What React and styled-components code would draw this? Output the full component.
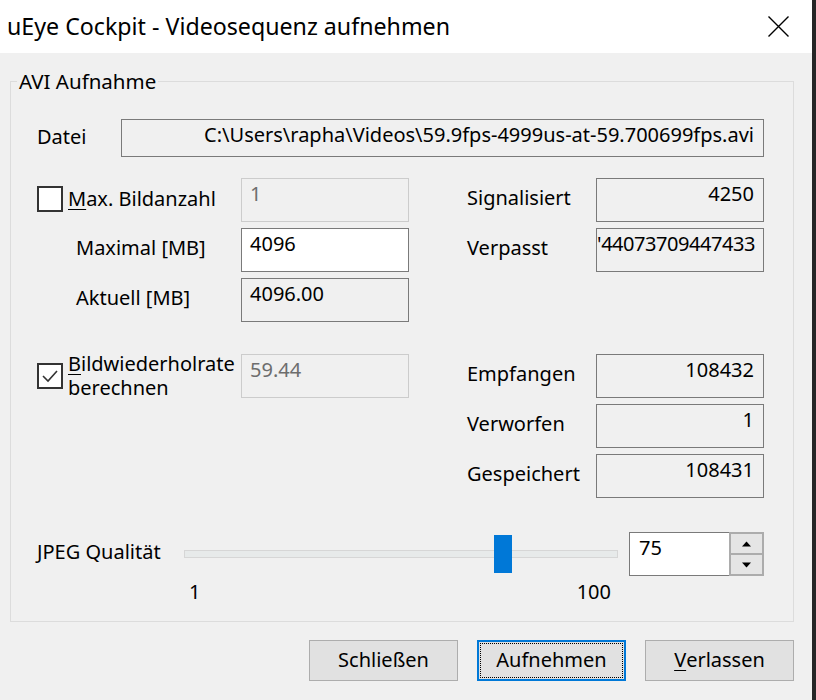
import React from 'react';
import styled, { createGlobalStyle, css } from 'styled-components';

const Global = createGlobalStyle`
  html, body { margin: 0; padding: 0; background: #262626; }
  body { font-family: "Noto Sans", "Open Sans", sans-serif; }
`;

const FONT = `"Noto Sans", "Open Sans", sans-serif`;

const Window = styled.div`
  width: 812px;
  height: 700px;
  background: #f0f0f0;
  display: flex;
  flex-direction: column;
  color: #000;
  font-family: ${FONT};
  font-size: 20px;
`;

const TitleBar = styled.div`
  height: 53px;
  flex: none;
  background: #fff;
  display: flex;
  align-items: center;
  justify-content: space-between;
  padding: 0 23px 0 7px;
  box-sizing: border-box;
`;

const Title = styled.div`
  font-size: 23.2px;
  line-height: 28px;
  margin-top: -2px;
`;

const Body = styled.div`
  flex: 1;
  display: flex;
  flex-direction: column;
  padding-top: 16px;
`;

const Group = styled.fieldset`
  margin: 0 18px 0 10px;
  padding: 0;
  min-width: 0;
  border: 1px solid #dcdcdc;
  height: 553px;
  box-sizing: border-box;
`;

const Legend = styled.legend`
  margin-left: 6px;
  padding: 0 2px;
  font-size: 20.5px;
  line-height: 24px;
`;

const Content = styled.div`
  padding: 26px 28px 0 26px;
  display: flex;
  flex-direction: column;
`;

const Row = styled.div`
  display: flex;
  align-items: center;
`;

const Label = styled.div`
  width: ${p => p.$w || 'auto'};
  flex: none;
  line-height: 24px;
  padding-left: ${p => p.$indent || '0px'};
  margin-bottom: ${p => p.$lift || '0px'};
  box-sizing: border-box;
`;

const Field = styled.div`
  box-sizing: border-box;
  width: ${p => p.$w || '168px'};
  height: ${p => p.$h || '44px'};
  border: 1px solid ${p => (p.$disabled ? '#cccccc' : '#7a7a7a')};
  background: ${p => (p.$white ? '#ffffff' : '#f0f0f0')};
  color: ${p => (p.$disabled ? '#6d6d6d' : '#000')};
  padding: 3px ${p => (p.$tight ? '8px' : '9px')} 0 ${p => (p.$tight ? '1px' : '8px')};
  line-height: 24px;
  letter-spacing: ${p => (p.$tight ? '-0.45px' : 'normal')};
  white-space: nowrap;
  overflow: hidden;
  display: flex;
  justify-content: ${p => (p.$right ? 'flex-end' : 'flex-start')};
  align-items: flex-start;
`;

const Grid = styled.div`
  margin-top: 21px;
  display: grid;
  grid-template-columns: 204px 168px 58px 129px 168px;
  grid-template-rows: 44px 44px 44px 20px 44px 44px 44px;
  row-gap: 6px;
`;

const Cell = styled.div`
  grid-row: ${p => p.$row};
  grid-column: ${p => p.$col};
  display: flex;
  align-items: ${p => p.$align || 'center'};
  padding-left: ${p => p.$indent || '0px'};
`;

const CheckWrap = styled.div`
  display: flex;
  align-items: ${p => (p.$multi ? 'flex-start' : 'center')};
  gap: 5px;
  ${p => !p.$multi && css`margin-bottom: 3px;`}
`;

const Box = styled.div`
  width: 26px;
  height: 26px;
  box-sizing: border-box;
  border: 2px solid #333333;
  background: #ffffff;
  flex: none;
  display: flex;
  align-items: center;
  justify-content: center;
  ${p => p.$multi && css`margin-top: 9px;`}
`;

const CheckText = styled.div`
  display: flex;
  flex-direction: column;
  line-height: 24px;
  ${p => p.$multi && css`margin-top: -2px;`}
`;

const U = styled.span`
  text-decoration: underline;
  text-underline-offset: 3px;
  text-decoration-thickness: 1px;
`;

const SliderRow = styled.div`
  margin-top: 34px;
  display: flex;
  align-items: center;
  height: 44px;
`;

const Track = styled.div`
  position: relative;
  width: 434px;
  height: 8px;
  box-sizing: border-box;
  background: #e7eaea;
  border: 1px solid #d6d6d6;
  margin-right: 11px;
  flex: none;
`;

const Thumb = styled.div`
  position: absolute;
  top: -16px;
  width: 18px;
  height: 38px;
  background: #0078d7;
`;

const Spin = styled.div`
  display: flex;
  width: 135px;
  height: 44px;
  box-sizing: border-box;
  border: 1px solid #7a7a7a;
  background: #fff;
`;

const SpinText = styled.div`
  flex: 1;
  padding: 3px 0 0 9px;
  line-height: 24px;
`;

const SpinButtons = styled.div`
  width: 35px;
  display: flex;
  flex-direction: column;
  background: #f0f0f0;
  margin: -1px -1px -1px 0;
  border: 1px solid #acacac;
  box-sizing: border-box;
  height: 44px;
`;

const SpinBtn = styled.div`
  flex: 1;
  background: #e5e5e5;
  border: 1px solid #acacac;
  display: flex;
  align-items: center;
  justify-content: center;
`;

const Ticks = styled.div`
  margin-top: 4px;
  margin-left: 147px;
  width: 434px;
  box-sizing: border-box;
  padding: 0 7px 0 5px;
  display: flex;
  justify-content: space-between;
  line-height: 24px;
`;

const Buttons = styled.div`
  margin-top: 18px;
  display: flex;
  justify-content: flex-end;
  gap: 19px;
  padding-right: 18px;
`;

const Button = styled.div`
  width: 149px;
  height: 41px;
  box-sizing: border-box;
  background: #e1e1e1;
  border: ${p => (p.$default ? '2px solid #0078d7' : '1px solid #adadad')};
  display: flex;
  align-items: center;
  justify-content: center;
  line-height: 24px;
  padding-bottom: 2px;
  ${p => p.$default && css`
    outline: 1px dotted #000;
    outline-offset: -4px;
  `}
`;

const Arrow = ({ up }) => (
  <svg width="9" height="6" viewBox="0 0 9 6">
    <path d={up ? 'M0 5.5 L4.5 0.5 L9 5.5 Z' : 'M0 0.5 L4.5 5.5 L9 0.5 Z'} fill="#000" />
  </svg>
);

const CloseIcon = () => (
  <svg width="21" height="21" viewBox="0 0 21 21">
    <path d="M0.5 0.5 L20.5 20.5 M20.5 0.5 L0.5 20.5" stroke="#000" strokeWidth="1.4" fill="none" />
  </svg>
);

const CheckMark = () => (
  <svg width="18" height="18" viewBox="0 0 18 18">
    <path d="M2 9 L7 14 L16 4" stroke="#333" strokeWidth="1.6" fill="none" />
  </svg>
);

export default function App() {
  const q = 75;
  const thumbLeft = ((q - 1) / 99) * (434 - 2 - 18);
  return (
    <>
      <Global />
      <Window>
        <TitleBar>
          <Title>uEye Cockpit - Videosequenz aufnehmen</Title>
          <CloseIcon />
        </TitleBar>
        <Body>
          <Group>
            <Legend>AVI Aufnahme</Legend>
            <Content>
              <Row>
                <Label $w="84px" $lift="3px">Datei</Label>
                <Field $w="643px" $h="38px" $right>
                  C:\Users\rapha\Videos\59.9fps-4999us-at-59.700699fps.avi
                </Field>
              </Row>
              <Grid>
                <Cell $row={1} $col={1}>
                  <CheckWrap>
                    <Box />
                    <CheckText><span><U>M</U>ax. Bildanzahl</span></CheckText>
                  </CheckWrap>
                </Cell>
                <Cell $row={1} $col={2}><Field $disabled>1</Field></Cell>
                <Cell $row={1} $col={4}><Label $lift="5px">Signalisiert</Label></Cell>
                <Cell $row={1} $col={5}><Field $right>4250</Field></Cell>

                <Cell $row={2} $col={1} $indent="39px"><Label $lift="5px">Maximal [MB]</Label></Cell>
                <Cell $row={2} $col={2}><Field $white>4096</Field></Cell>
                <Cell $row={2} $col={4}><Label $lift="5px">Verpasst</Label></Cell>
                <Cell $row={2} $col={5}><Field $right $tight>'44073709447433</Field></Cell>

                <Cell $row={3} $col={1} $indent="39px"><Label $lift="5px">Aktuell [MB]</Label></Cell>
                <Cell $row={3} $col={2}><Field>4096.00</Field></Cell>

                <Cell $row={5} $col={1} $align="flex-start">
                  <CheckWrap $multi>
                    <Box $multi><CheckMark /></Box>
                    <CheckText $multi>
                      <span><U>B</U>ildwiederholrate</span>
                      <span>berechnen</span>
                    </CheckText>
                  </CheckWrap>
                </Cell>
                <Cell $row={5} $col={2}><Field $disabled>59.44</Field></Cell>
                <Cell $row={5} $col={4}><Label $lift="5px">Empfangen</Label></Cell>
                <Cell $row={5} $col={5}><Field $right>108432</Field></Cell>

                <Cell $row={6} $col={4}><Label $lift="5px">Verworfen</Label></Cell>
                <Cell $row={6} $col={5}><Field $right>1</Field></Cell>

                <Cell $row={7} $col={4}><Label $lift="5px">Gespeichert</Label></Cell>
                <Cell $row={7} $col={5}><Field $right>108431</Field></Cell>
              </Grid>
              <SliderRow>
                <Label $w="147px" $lift="4px">JPEG Qualität</Label>
                <Track>
                  <Thumb style={{ left: `${thumbLeft}px` }} />
                </Track>
                <Spin>
                  <SpinText>75</SpinText>
                  <SpinButtons>
                    <SpinBtn><Arrow up /></SpinBtn>
                    <SpinBtn><Arrow /></SpinBtn>
                  </SpinButtons>
                </Spin>
              </SliderRow>
              <Ticks>
                <span>1</span>
                <span>100</span>
              </Ticks>
            </Content>
          </Group>
          <Buttons>
            <Button>Schließen</Button>
            <Button $default>Aufnehmen</Button>
            <Button><U>V</U>erlassen</Button>
          </Buttons>
        </Body>
      </Window>
    </>
  );
}
